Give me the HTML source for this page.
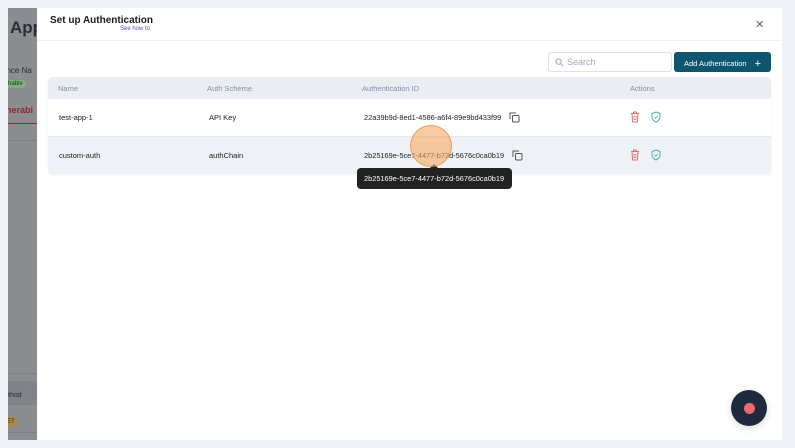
<!DOCTYPE html>
<html><head><meta charset="utf-8"><style>
*{box-sizing:border-box;margin:0;padding:0}
body{width:795px;height:448px;background:#eff3f8;font-family:"Liberation Sans",sans-serif;position:relative;overflow:hidden;color:#222}
.strip{position:absolute;left:8px;top:8px;width:29px;height:432px;background:#8b8d90;overflow:hidden}
.strip div{position:absolute;white-space:nowrap}
.modal{position:absolute;left:37px;top:8px;width:745px;height:432px;background:#fff}
.hdr{height:33px;border-bottom:1px solid #eef0f3;position:relative}
.title{position:absolute;left:13px;top:7px;font-size:10px;font-weight:bold;color:#1b1b1b}
.see{position:absolute;left:83px;top:18px;font-size:6px;color:#4a55c0}
.close{position:absolute;left:718px;top:10px;font-size:11px;color:#666}
.search{position:absolute;left:511px;top:44px;width:124px;height:20px;border:1px solid #dde2e8;border-radius:3px;font-size:9px;color:#aab;padding:4px 0 0 18px}
.btn{position:absolute;left:637px;top:44px;width:97px;height:20px;background:#0e5670;border-radius:3px;color:#fff;font-size:7.5px;padding:5px 0 0 10px;white-space:nowrap}
.tbl{position:absolute;left:11px;top:69px;width:723px;height:97px;border-radius:5px;overflow:hidden;background:#eaeef3;box-shadow:0 1px 2px rgba(0,0,0,.06)}
.row{position:absolute;left:0;width:723px;font-size:7.5px;white-space:nowrap}
.row span{position:absolute}
.h{top:0;height:22px;color:#8590a3;}
.h span{top:7px}
.r1{top:22px;height:37px;background:#fff}
.r2{top:59px;height:38px;background:#eef2f6;border-top:1px solid #e3e7ec}
.r1 span,.r2 span{top:14px}
.id{font-size:7.4px}
.tip{position:absolute;left:357px;top:168px;width:155px;height:21px;background:#222;border-radius:4px;color:#fff;font-size:7.4px;padding:6px 0 0 7px;white-space:nowrap}
.circ{position:absolute;left:410px;top:125px;width:42px;height:42px;border-radius:50%;background:rgba(246,168,100,.6);border:1px solid rgba(230,140,60,.7)}
.fab{position:absolute;left:731px;top:390px;width:36px;height:36px;border-radius:50%;background:#1f2a3e;box-shadow:0 2px 8px rgba(0,0,0,.15)}
.fab i{position:absolute;left:13px;top:13px;width:11px;height:11px;border-radius:50%;background:#e96b6b}
</style></head><body>
<div class="strip">
 <div style="left:2px;top:10px;font-size:17px;font-weight:bold;color:#2c2f35">App</div>
 <div style="left:-6px;top:58px;font-size:8px;color:#2c2f35">ance Na</div>
 <div style="left:-6px;top:72px;font-size:6px;background:#7fae7c;border-radius:6px;padding:1px 3px;color:#1e3a1e">chable</div>
 <div style="left:-2px;top:97px;font-size:9px;color:#8b2a2a;font-weight:bold">nerabi</div>
 <div style="left:0;top:115px;width:29px;height:1px;background:#8b2a2a"></div>
 <div style="left:0;top:132px;width:29px;height:1px;background:#7d7f82"></div>
 <div style="left:0;top:365px;width:29px;height:1px;background:#7d7f82"></div>
 <div style="left:0;top:373px;width:29px;height:24px;background:#808388"></div>
 <div style="left:0;top:384px;font-size:7px;color:#2c2f35">thod</div>
 <div style="left:-4px;top:409px;font-size:6px;background:#a88a4a;border-radius:6px;padding:2px 3px;color:#3a2a10">ET</div>
 <div style="left:0;top:424px;width:29px;height:1px;background:#7d7f82"></div>
</div>
<div class="modal">
 <div class="hdr"><div class="title">Set up Authentication</div><div class="see">See how to</div><div class="close">✕</div></div>
 <div class="search"><svg style="position:absolute;left:6px;top:5px" width="9" height="9" viewBox="0 0 10 10"><circle cx="4" cy="4" r="3" fill="none" stroke="#aab" stroke-width="1.2"/><path d="M6.3 6.3L9 9" stroke="#aab" stroke-width="1.2"/></svg>Search</div>
 <div class="btn">Add Authentication <span style="margin-left:6px;font-size:11px;position:relative;top:1px">+</span></div>
 <div class="tbl">
  <div class="row h"><span style="left:10px">Name</span><span style="left:159px">Auth Scheme</span><span style="left:314px">Authentication ID</span><span style="left:582px">Actions</span></div>
  <div class="row r1"><span style="left:11px">test-app-1</span><span style="left:161px">API Key</span><span class="id" style="left:316px">22a39b9d-8ed1-4586-a6f4-89e9bd433f99</span>
   <svg style="position:absolute;left:461px;top:13px" width="11" height="11" viewBox="0 0 11 11"><path d="M1 7V1h6" fill="none" stroke="#555"/><rect x="3.5" y="3.5" width="6.5" height="6.5" rx="1" fill="none" stroke="#555"/></svg>
   <svg style="position:absolute;left:582px;top:12px" width="10" height="12" viewBox="0 0 10 12"><path d="M1 2.5h8M3.5 2.5V1h3v1.5M2 2.5l.6 8.5h4.8L8 2.5" fill="none" stroke="#e07070"/><rect x="4" y="5.5" width="2" height="3" fill="none" stroke="#e07070" stroke-width=".7"/></svg>
   <svg style="position:absolute;left:603px;top:12px" width="10" height="12" viewBox="0 0 10 12"><path d="M5 1L9 2.5V6c0 2.5-2 4-4 5-2-1-4-2.5-4-5V2.5z" fill="none" stroke="#4fb0a8"/><path d="M3.3 6l1.2 1.2L6.8 5" fill="none" stroke="#4fb0a8" stroke-width=".8"/></svg>
  </div>
  <div class="row r2"><span style="left:11px">custom-auth</span><span style="left:161px">authChain</span><span class="id" style="left:316px">2b25169e-5ce7-4477-b72d-5676c0ca0b19</span>
   <svg style="position:absolute;left:464px;top:13px" width="11" height="11" viewBox="0 0 11 11"><path d="M1 7V1h6" fill="none" stroke="#555"/><rect x="3.5" y="3.5" width="6.5" height="6.5" rx="1" fill="none" stroke="#555"/></svg>
   <svg style="position:absolute;left:582px;top:12px" width="10" height="12" viewBox="0 0 10 12"><path d="M1 2.5h8M3.5 2.5V1h3v1.5M2 2.5l.6 8.5h4.8L8 2.5" fill="none" stroke="#e07070"/><rect x="4" y="5.5" width="2" height="3" fill="none" stroke="#e07070" stroke-width=".7"/></svg>
   <svg style="position:absolute;left:603px;top:12px" width="10" height="12" viewBox="0 0 10 12"><path d="M5 1L9 2.5V6c0 2.5-2 4-4 5-2-1-4-2.5-4-5V2.5z" fill="none" stroke="#4fb0a8"/><path d="M3.3 6l1.2 1.2L6.8 5" fill="none" stroke="#4fb0a8" stroke-width=".8"/></svg>
  </div>
 </div>
</div>
<div class="tip">2b25169e-5ce7-4477-b72d-5676c0ca0b19</div>
<div style="position:absolute;left:430px;top:164px;width:0;height:0;border-left:4px solid transparent;border-right:4px solid transparent;border-bottom:4px solid #222"></div>
<div class="circ"></div>
<div class="fab"><i></i></div>
</body></html>
